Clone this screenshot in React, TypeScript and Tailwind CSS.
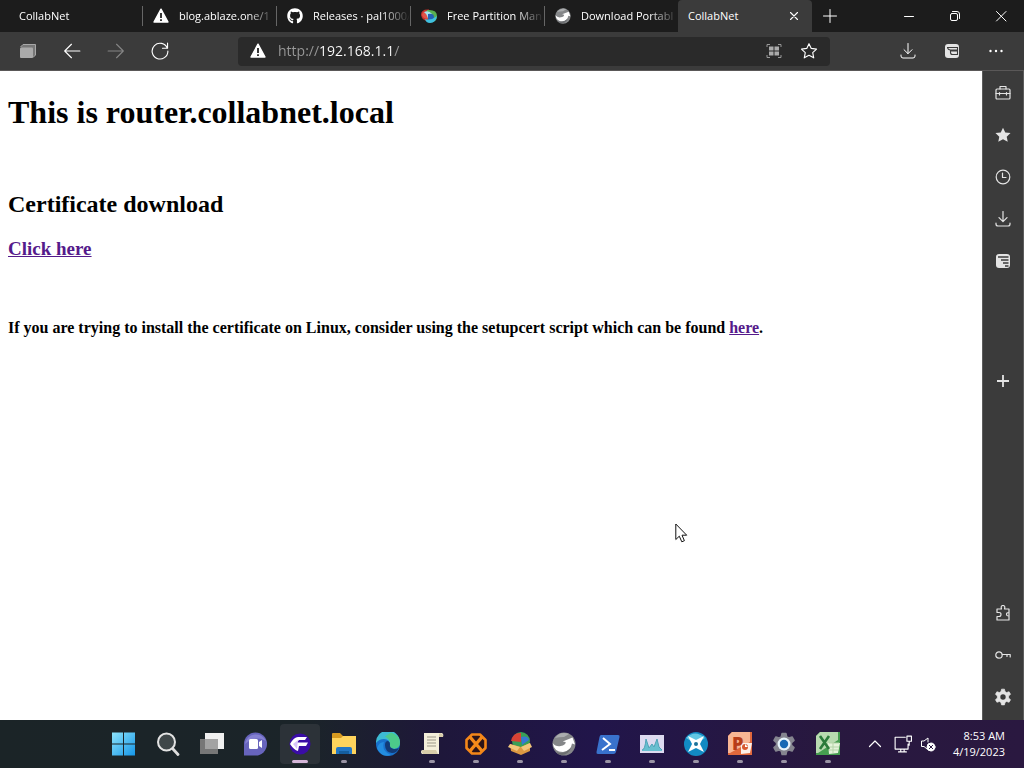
import { ReactNode } from "react";
import { FaGithub } from "react-icons/fa";

const Stroke = ({
  children,
  size = 16,
  width = 1,
  className = ""
}: {
  children: ReactNode;
  size?: number;
  width?: number;
  className?: string;
}) => (
  <svg
    width={size}
    height={size}
    viewBox="0 0 16 16"
    fill="none"
    stroke="currentColor"
    strokeWidth={width}
    strokeLinecap="round"
    strokeLinejoin="round"
    className={className}
  >
    {children}
  </svg>
);

const Warning = () => (
  <svg width="16" height="16" viewBox="0 0 16 16">
    <path
      d="M8 1.2 15 14H1Z"
      fill="#fff"
      stroke="#fff"
      strokeWidth="1.4"
      strokeLinejoin="round"
    />
    <path d="M7.1 5h1.8v5H7.1zM7.1 11.3h1.8v1.7H7.1z" fill="#222" />
  </svg>
);

const PartitionIcon = () => (
  <svg width="18" height="16" viewBox="0 0 18 16" className="shrink-0">
    <path d="M1 7Q1 1 9 1.500v11.500Q2 13 1 7Z" fill="#c5322c" />
    <path d="M7 2q10-1 10 6 0 6-7 6.500L6 8Z" fill="#58b052" />
    <path d="M4 4q5-2 8 2l-3 4q-4 0-5-6Z" fill="#a8e5ee" />
    <path d="M8 6q6-1 6 3t-6 3Z" fill="#2463b8" />
    <path d="M5 11q6 2 12-3-1 7-7 7-4 0-5-4Z" fill="#3fc0e0" />
    <path d="M3 4q4 1 5 7-5 0-6-4Z" fill="#e25248" />
  </svg>
);

const SwirlIcon = ({ size = 24 }: { size?: number }) => (
  <svg width={size} height={size} viewBox="0 0 24 24">
    <circle cx="12" cy="12" r="11.5" fill="#858789" />
    <path d="M3 6a11 11 0 0 1 14-4l-5 3q-5 0-9 1Z" fill="#abadaf" />
    <path
      d="M.7 11q3 4 8 3 5-1 5-4l-3-.5L20.500 5.500 23 12.500l-3-1q-1 7-9 8.500Q2 20 .7 11Z"
      fill="#fff"
    />
    <path d="M4 20q8 3 15-4-3 7-9 7-4 0-6-3Z" fill="#6b6d70" />
  </svg>
);

const Download = () => (
  <>
    <path d="M8 .5v10M4 6.700l4 4 4-4" />
    <path d="M1 12v1q0 2 2 2h10q2 0 2-2v-1" />
  </>
);

const ReaderIcon = () => (
  <svg width="16" height="16" viewBox="0 0 16 16">
    <rect x="1" y="1" width="14" height="14" rx="3" fill="#e4e4e4" />
    <path
      d="M3 4.500h10.500V7H6.500Q4 7 3.500 4.500M6.500 7.500v2q0 2 2 2h5V8H7M13.500 11.500H7"
      stroke="#3b3b3b"
      strokeWidth="1.100"
      fill="none"
    />
  </svg>
);

const ReaderSideIcon = () => (
  <svg width="16" height="16" viewBox="0 0 16 16">
    <rect x="1" y="1" width="14" height="14" rx="3" fill="#e4e4e4" />
    <path
      d="M3 4h10.500M6 7h7.500M8 10h5.500M10 13h3.500"
      stroke="#3b3b3b"
      strokeWidth="1.5"
      fill="none"
    />
  </svg>
);

const GEAR =
  "M6.700 1h2.600l.5 2.200 1.400.8 2.200-.7 1.300 2.300-1.700 1.500v1.800l1.700 1.500-1.300 2.300-2.200-.7-1.400.8-.5 2.200H6.700l-.5-2.200-1.400-.8-2.200.7-1.300-2.300L3 8.900V7.100L1.300 5.600l1.300-2.300 2.200.7 1.400-.8Z";
const STAR =
  "m8 1.500 2 4.200 4.700.6-3.400 3.200.9 4.600L8 11.800l-4.200 2.300.9-4.600L1.300 6.300 6 5.700Z";

const tabs = [
  { title: "CollabNet" },
  { title: "blog.ablaze.one/1", icon: <Warning /> },
  { title: "Releases · pal1000/", icon: <FaGithub size={16} /> },
  { title: "Free Partition Man", icon: <PartitionIcon /> },
  { title: "Download Portabl", icon: <SwirlIcon size={16} /> }
];

const TabBar = () => (
  <header className="flex h-8 bg-[#1c1c1c] pl-2 text-white">
    <nav className="flex min-w-0 items-center">
      {tabs.map(({ title, icon }, i) => (
        <button
          key={title}
          className={`flex h-5 w-[134px] items-center gap-2.5 overflow-hidden text-left whitespace-nowrap ${
            i ? "border-l border-[#666] pl-2.5" : "pl-[11px]"
          }`}
        >
          {icon && <span className="flex w-4 shrink-0 justify-center">{icon}</span>}
          <span className="flex-1 overflow-hidden [mask-image:linear-gradient(to_right,#000_70%,transparent)] text-[11px]">
            {title}
          </span>
        </button>
      ))}
      <div className="flex h-8 w-[134px] items-center justify-between rounded-t bg-[#3b3b3b] pr-2.5 pl-2.5">
        <button className="text-[11px]">CollabNet</button>
        <button aria-label="Close tab" className="flex size-4 items-center justify-center">
          <Stroke size={14} width={1.3}>
            <path d="m4 4 8 8M12 4l-8 8" />
          </Stroke>
        </button>
      </div>
      <button aria-label="New tab" className="flex size-9 items-center justify-center">
        <Stroke>
          <path d="M8 1.500v13M1.500 8h13" />
        </Stroke>
      </button>
    </nav>
    <div className="ml-auto flex">
      <button aria-label="Minimize" className="flex w-[46px] items-center justify-center">
        <Stroke>
          <path d="M3.500 8.500h9" />
        </Stroke>
      </button>
      <button aria-label="Restore" className="flex w-[46px] items-center justify-center">
        <Stroke>
          <rect x="3.500" y="5.500" width="7" height="7" rx="1.500" />
          <path d="M5.500 3.500H10q2.500 0 2.500 2.500v4.500" />
        </Stroke>
      </button>
      <button aria-label="Close" className="flex w-[46px] items-center justify-center">
        <Stroke>
          <path d="m3.500 3.500 9.500 9.500M13 3.500 3.500 13" />
        </Stroke>
      </button>
    </div>
  </header>
);

const ToolButton = ({ label, children }: { label: string; children: ReactNode }) => (
  <button aria-label={label} className="flex h-full w-11 shrink-0 items-center justify-center">
    {children}
  </button>
);

const Toolbar = () => (
  <div className="flex h-[39px] items-center border-b border-[#5a5858] bg-[#3b3b3b] px-1.5 text-white">
    <ToolButton label="Tab actions">
      <svg width="18" height="16" viewBox="0 0 18 16">
        <path d="M1.500 4 4 1.500h12.500V12L14 14.500" fill="#777" stroke="#a8a8a8" />
        <rect x="1" y="4.500" width="13" height="10.500" rx="1" fill="#aaa" />
      </svg>
    </ToolButton>
    <ToolButton label="Back">
      <Stroke size={18}>
        <path d="M15 8H1.500M7.500 2 1.500 8l6 6" />
      </Stroke>
    </ToolButton>
    <ToolButton label="Forward">
      <Stroke size={18} className="text-[#858585]">
        <path d="M1 8h13.500M8.500 2l6 6-6 6" />
      </Stroke>
    </ToolButton>
    <ToolButton label="Refresh">
      <Stroke size={18}>
        <path d="M14.500 5.500A7 7 0 1 0 15 8M14.700 1v4.500h-4.500" />
      </Stroke>
    </ToolButton>
    <div className="mx-14 flex h-[29px] min-w-0 flex-1 items-center rounded bg-[#2a2a2a] pr-3 pl-3">
      <Warning />
      <input
        aria-label="Address"
        defaultValue="http://192.168.1.1/"
        className="ml-3 min-w-0 flex-1 bg-[linear-gradient(to_right,#999_42px,#fff_42px,#fff_115px,#999_115px)] bg-clip-text text-sm text-transparent outline-none"
      />
      <button aria-label="Application guard" className="mr-[18px]">
        <svg width="16" height="16" viewBox="0 0 16 16">
          <path
            d="M1 4V1.500h3M12 1.500h3V4M1 12v2.500h3M12 14.500h3V12"
            stroke="#999"
            fill="none"
          />
          <path d="M3 3.500h4.500v4H3zM8.500 3.500H13v4H8.500zM3 8.500h4.500v4H3zM8.500 8.500H13v4H8.500z" fill="#aaa" />
        </svg>
      </button>
      <button aria-label="Add to favorites">
        <Stroke size={18}>
          <path d={STAR} />
        </Stroke>
      </button>
    </div>
    <ToolButton label="Downloads">
      <Stroke>
        <Download />
      </Stroke>
    </ToolButton>
    <ToolButton label="Reading list">
      <ReaderIcon />
    </ToolButton>
    <ToolButton label="Menu">
      <svg width="16" height="16" viewBox="0 0 16 16" fill="#fff">
        <circle cx="2.500" cy="8" r="1.200" />
        <circle cx="8" cy="8" r="1.200" />
        <circle cx="13.500" cy="8" r="1.200" />
      </svg>
    </ToolButton>
  </div>
);

const SideButton = ({ label, children }: { label: string; children: ReactNode }) => (
  <button aria-label={label} className="flex h-[42px] w-full items-center justify-center">
    {children}
  </button>
);

const Sidebar = () => (
  <aside className="flex w-[42px] shrink-0 flex-col border-r border-l border-[#5c5c5c] bg-[#3b3b3b] pt-px pb-0.5 text-[#e4e4e4]">
    <SideButton label="Tools">
      <Stroke width={1.2}>
        <rect x="1" y="4" width="14" height="10" rx="1" />
        <path d="M5 4V1.500h6V4M1 8.500h14M4.500 7.500v2.500M11.500 7.500v2.500" />
      </Stroke>
    </SideButton>
    <SideButton label="Favorites">
      <svg width="18" height="18" viewBox="0 0 16 16" fill="currentColor">
        <path d={STAR} />
      </svg>
    </SideButton>
    <SideButton label="History">
      <Stroke width={1.2}>
        <circle cx="8" cy="8" r="6.800" />
        <path d="M7.500 4v4.500H11" />
      </Stroke>
    </SideButton>
    <SideButton label="Downloads">
      <Stroke width={1.2}>
        <Download />
      </Stroke>
    </SideButton>
    <SideButton label="Reading list">
      <ReaderSideIcon />
    </SideButton>
    <div className="mt-[78px]">
      <SideButton label="Add panel">
        <Stroke width={1.8}>
          <path d="M8 2v12M2 8h12" strokeLinecap="butt" />
        </Stroke>
      </SideButton>
    </div>
    <div className="mt-auto">
      <SideButton label="Extensions">
        <Stroke width={1.2}>
          <path d="M2 4h4.500q-1-3.500 1.500-3.500T9.500 4H14v11H2v-3.500h2q2 0 2-2t-2-2H2ZM14 7.500q-2.500 0-2.500 1.800T14 11" />
        </Stroke>
      </SideButton>
      <SideButton label="Passwords">
        <Stroke width={1.2}>
          <circle cx="4" cy="8" r="3.200" />
          <path d="M7.200 7.500h8V10M12 7.500v2" />
        </Stroke>
      </SideButton>
      <SideButton label="Settings">
        <svg width="18" height="18" viewBox="0 0 16 16">
          <path
            d={GEAR}
            fill="currentColor"
            stroke="currentColor"
            strokeWidth=".6"
            strokeLinejoin="round"
          />
          <circle cx="8" cy="8" r="2.400" fill="#3b3b3b" />
        </svg>
      </SideButton>
    </div>
  </aside>
);

const Page = () => (
  <main className="relative min-w-0 flex-1 bg-white px-2 font-['Liberation_Serif',serif] font-bold text-black">
    <h1 className="mt-[23px] text-[32px] leading-9">This is router.collabnet.local</h1>
    <h2 className="mt-15 text-2xl leading-7">Certificate download</h2>
    <h3 className="mt-5 text-[19px] leading-[22px]">
      <a href="#certificate" className="text-[#551a8b] underline">
        Click here
      </a>
    </h3>
    <h4 className="mt-[58px] text-base leading-5">
      If you are trying to install the certificate on Linux, consider using the setupcert script which
      can be found{" "}
      <a href="#setupcert" className="text-[#551a8b] underline">
        here
      </a>
      .
    </h4>
    <svg
      width="14"
      height="21"
      viewBox="0 0 14 21"
      className="pointer-events-none absolute top-[452px] left-[675px]"
    >
      <path
        d="M.8 1v15.500l3.500-3.300 2.500 5.600 2.600-1.100L7 12.200h4.700Z"
        fill="#fff"
        stroke="#111"
      />
    </svg>
  </main>
);

const apps: { name: string; icon: ReactNode; running?: boolean; active?: boolean }[] = [
  {
    name: "Start",
    icon: (
      <>
        <defs>
          <linearGradient id="start" x2="1" y2="1">
            <stop stopColor="#8de3fa" />
            <stop offset="1" stopColor="#1596e8" />
          </linearGradient>
        </defs>
        <path
          d="M0 .5h11v11H0zM12 .5h11v11H12zM0 12.500h11v11H0zM12 12.500h11v11H12z"
          fill="url(#start)"
        />
      </>
    )
  },
  {
    name: "Search",
    icon: (
      <>
        <path d="m17 17 5 5.500" stroke="#ddd" strokeWidth="2.800" strokeLinecap="round" />
        <circle cx="10.500" cy="10" r="8.500" fill="#3f4749" stroke="#e3e3e3" strokeWidth="2" />
      </>
    )
  },
  {
    name: "Task view",
    icon: (
      <>
        <rect x="5" y="1" width="19" height="16" fill="#f0f0f0" />
        <rect x="0" y="7" width="18" height="15" fill="#777" />
        <rect x="5" y="7" width="13" height="10" fill="#a3a3a3" />
      </>
    )
  },
  {
    name: "Chat",
    icon: (
      <>
        <path d="M0 23.500V12a11.500 11.500 0 1 1 11.500 11.500Z" fill="#6764bc" />
        <path d="M1 12a11 11 0 0 1 21-3Q10 3 1 12Z" fill="#8581d2" />
        <rect x="5" y="7" width="9" height="10" rx="1.500" fill="#fff" />
        <path d="m15 10 3-2v8l-3-2Z" fill="#fff" />
      </>
    )
  },
  {
    name: "Browser",
    running: true,
    active: true,
    icon: (
      <>
        <circle cx="12" cy="12" r="10.500" fill="#3a0ca6" />
        <path d="M2 12Q6 5 10 5h9l-2 3h-6l-2 2.500h11L18 14h-7l-1 5q-4-1-8-7Z" fill="#fff" />
        <path d="m5 12 5-4-1 9Z" fill="#d6c2fa" />
      </>
    )
  },
  {
    name: "File Explorer",
    running: true,
    icon: (
      <>
        <path d="M0 2q0-1 1-1h7l3 3h13v5H0Z" fill="#d79a20" />
        <path d="M0 6h9l2-2h13v18H0Z" fill="#ffd45c" />
        <path d="M4 22v-5q0-2 2-2h12q2 0 2 2v5Z" fill="#2377c4" />
        <path d="M7 19h10v3H7z" fill="#155e9e" />
      </>
    )
  },
  {
    name: "Edge",
    icon: (
      <>
        <circle cx="12" cy="12" r="12" fill="#1871cc" />
        <path d="M0 11A12 12 0 0 1 24 10q0 6-6 7-5 0-4-4 0-6-6-6-5 0-8 4Z" fill="#3dbbd3" />
        <path d="M15 .5q9 3 9 10 0 6-6 6-5 0-4-4 1-5-5-8Z" fill="#53d06b" opacity=".7" />
        <path d="M14 12q-1 4 4 5 3 0 5-1-2 5-7 5-7-1-7-8 0-4 3-4 2 1 2 3Z" fill="#123b78" />
        <path d="M8 10q-3 9 7 13Q5 26 1 16q2-6 7-6Z" fill="#238de0" />
      </>
    )
  },
  {
    name: "Script",
    running: true,
    icon: (
      <>
        <path d="M4 1h18q2 1 1 4h-4v17H2q-2-2 0-4h2Z" fill="#f4efdb" />
        <path d="M19 5V2q2-2 4 1v2ZM2 18h14l2 4H3q-2-2-1-4Z" fill="#d8cda9" />
        <path d="M7 5h9M7 8h9M7 11h9M7 14h9" stroke="#9b9789" />
      </>
    )
  },
  {
    name: "X",
    running: true,
    icon: (
      <>
        <path
          d="M8 2.500h8L21.500 8v8L16 21.500H8L2.500 16V8Z"
          fill="#2c1418"
          stroke="#f48719"
          strokeWidth="2.600"
          strokeLinejoin="round"
        />
        <path d="m6 5 12 14M18 5 6 19" stroke="#f58a1a" strokeWidth="3.400" />
      </>
    )
  },
  {
    name: "Package",
    running: true,
    icon: (
      <>
        <circle cx="13" cy="9" r="9" fill="#3a9f56" />
        <path d="M3 9Q5 0 13 1v9Z" fill="#d74235" />
        <path d="M13 5q7-2 8 3l-7 5Z" fill="#3778d4" />
        <path d="m2 12 11 3v8L3 19ZM13 15l9-4v8l-9 4Z" fill="#dc9942" />
        <path d="m2 12 10 3-3 4-9-4ZM13 15l9-4 2 4-8 4Z" fill="#f2c67b" />
      </>
    )
  },
  { name: "Swirl", running: true, icon: <SwirlIcon /> },
  {
    name: "PowerShell",
    running: true,
    icon: (
      <>
        <path d="M5 3h17q2 0 1.500 2L20 20q-.5 2-2.500 2H2Q0 22 .5 20L3.500 5Q4 3 5 3Z" fill="#3972cc" />
        <path d="m7 6 7 6-8 6M13 18h6" stroke="#fff" strokeWidth="2" fill="none" />
      </>
    )
  },
  {
    name: "Monitor",
    running: true,
    icon: (
      <>
        <path d="M0 3h24v18H0Z" fill="#dddaf0" />
        <path d="M2 18q3 0 4-11l3 9 3-4 2 3 3-8 2 8 3 3v1H2Z" fill="#68bfd0" />
        <path d="M2 18q3 0 4-11l3 9 3-4 2 3 3-8 2 8 3 3" fill="none" stroke="#4fa3b8" />
      </>
    )
  },
  {
    name: "Shuriken",
    running: true,
    icon: (
      <>
        <circle cx="12" cy="12" r="12" fill="#128ac3" />
        <path d="M2 6q9-9 19 0l-9 6Z" fill="#62c7e3" />
        <path d="m4 4 8 4 8-4-4 8 4 8-8-4-8 4 4-8Z" fill="#fff" />
        <circle cx="12" cy="12" r="2" fill="#1c729a" />
      </>
    )
  },
  {
    name: "PowerPoint",
    running: true,
    icon: (
      <>
        <path d="M4 0h20v23H0V4Z" fill="#e0683c" />
        <path d="M4 0h18v10L2 21H0V4Z" fill="#f8b694" />
        <path d="M13 11h11l-2 10-9 1Z" fill="#fdf1ea" />
        <text x="4" y="18" fontFamily="Open Sans, sans-serif" fontSize="18" fontWeight="800" fill="#b83d19">
          P
        </text>
        <circle cx="17" cy="15" r="3" fill="#d75830" />
        <path d="M17 12v3h3" fill="#fff" />
      </>
    )
  },
  {
    name: "Settings",
    running: true,
    icon: (
      <>
        <path d={GEAR} transform="scale(1.5)" fill="#85858f" stroke="#85858f" strokeLinejoin="round" />
        <circle cx="12" cy="12" r="6.500" fill="#e7f3fb" />
        <circle cx="12" cy="12" r="4.200" fill="#1769b5" />
      </>
    )
  },
  {
    name: "Excel",
    running: true,
    icon: (
      <>
        <path d="M4 0h20v23H0V4Z" fill="#469d50" />
        <path d="M4 0h18v8L2 21H0V4Z" fill="#b8dab0" />
        <path d="M12 11h12l-2 10-9 1Z" fill="#e4f3da" />
        <path d="M13 11h10M13 15h10M13 18h9M17 10v11" stroke="#b5d4a9" />
        <path d="m4 4 9 13M13 4 4 17" stroke="#2a7a3a" strokeWidth="2.600" />
      </>
    )
  }
];

const Taskbar = () => (
  <footer className="flex h-12 items-center justify-end bg-[linear-gradient(to_right,#1b2427_0%,#1b2429_30%,#1e173a_43%,#21154a_58%,#28183f_80%,#2a1840_100%)] text-white">
    <nav className="flex h-full">
      {apps.map(({ name, icon, running, active }) => (
        <button
          key={name}
          aria-label={name}
          className="relative flex w-11 items-center justify-center"
        >
          {active && <span className="absolute inset-x-0.5 inset-y-1 rounded bg-[#2c3238]" />}
          <svg width="24" height="24" viewBox="0 0 24 24" fill="none" className="relative">
            {icon}
          </svg>
          {running && (
            <span
              className={`absolute bottom-[5px] h-[3px] rounded-full ${
                active ? "w-4 bg-[#d5b6d8]" : "w-1.5 bg-[#9a94a5]"
              }`}
            />
          )}
        </button>
      ))}
    </nav>
    <div className="flex w-[174px] items-center pr-[19px] pl-[17px]">
      <button aria-label="Show hidden icons">
        <Stroke width={1.200}>
          <path d="m2.500 10.500 5.500-5.500 5.500 5.500" />
        </Stroke>
      </button>
      <button aria-label="Network and volume" className="ml-[11px] flex items-center gap-2">
        <Stroke size={18}>
          <path d="M10 2H1v10.500h11.500V8M4 15h7M6 12.500V15M9 12.500V15M11.500 1h4v4.500h-4ZM13.500 5.500V9" />
        </Stroke>
        <Stroke size={16}>
          <path d="M8 6V2L4 5H1.500v5.500H4L7 13" />
          <circle cx="11" cy="11" r="4" fill="#fff" />
          <path d="m9.300 9.300 3.400 3.400M12.700 9.300l-3.400 3.400" stroke="#2a1840" />
        </Stroke>
      </button>
      <time className="ml-auto text-right text-[11px] leading-4">
        8:53 AM
        <br />
        4/19/2023
      </time>
    </div>
  </footer>
);

const App = () => {
  return (
    <div className="flex min-h-screen flex-col overflow-hidden bg-[#1c1c1c] font-['Open_Sans',sans-serif]">
      <TabBar />
      <Toolbar />
      <div className="flex flex-1">
        <Page />
        <Sidebar />
      </div>
      <Taskbar />
    </div>
  );
};

export default App;
